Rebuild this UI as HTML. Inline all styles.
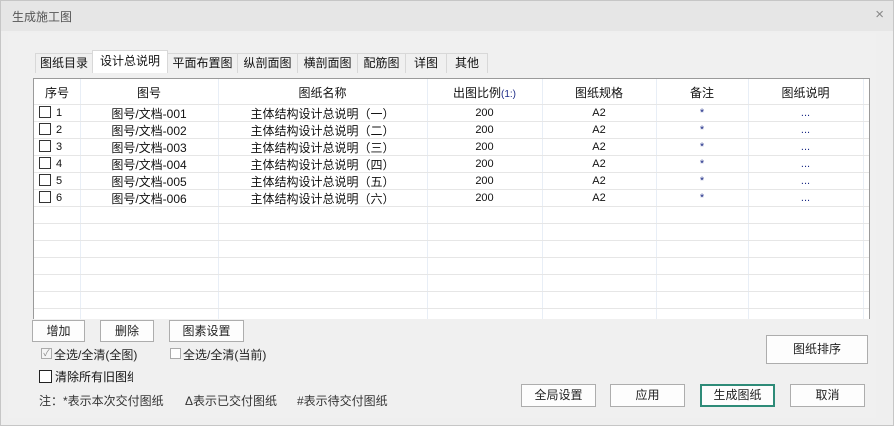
<!DOCTYPE html>
<html><head><meta charset="utf-8"><style>
*{box-sizing:border-box;margin:0;padding:0}
body{width:894px;height:426px;overflow:hidden;background:#efefef;font-family:"Liberation Sans","Noto Sans CJK SC",sans-serif;font-size:12px;color:#111;position:relative}
.a{position:absolute}
#frame{left:0;top:0;width:894px;height:426px;border:1px solid #c6c6c6}
#title{left:1px;top:1px;width:892px;height:30px;background:#e6e6e6}
#title span{position:absolute;left:11px;top:7px;color:#555;font-size:12px}
#close{right:10px;top:6px;color:#888;font-size:15px}
#panel{left:8px;top:33px;width:868px;height:385px;background:#f0f0f0}
.tab{position:absolute;top:53px;height:20px;border:1px solid #d8d8d8;border-bottom:none;background:#f0f0f0;text-align:center;line-height:18px;font-size:12px;color:#111}
.tab.sel{top:50px;height:23px;background:#fff;line-height:20px;z-index:2}
#tbl{left:33px;top:78px;width:837px;height:241px;background:#fff;border:1px solid #9a9a9a;border-right:1px solid #9a9a9a;border-bottom:none}
.vl{position:absolute;top:0;width:1px;height:240px;background:#e8eef6}
.hl{position:absolute;left:0;width:835px;height:1px;background:#e6e6e6}
.h{position:absolute;top:5px;text-align:center;font-size:12px}
.c{position:absolute;text-align:center;font-size:11px;color:#111}
.cb{position:absolute;width:12px;height:12px;border:1px solid #333;background:#fff}
.btn{position:absolute;border:1px solid #adadad;background:#fdfdfd;text-align:center;font-size:12px;color:#222}
.blue{color:#1b2a86}
</style></head><body>
<div class="a" id="frame"></div>
<div class="a" id="title"><span>生成施工图</span></div>
<div class="a" id="close">×</div>
<div class="a" id="panel"></div>

<div class="tab" style="left:35px;width:58px">图纸目录</div>
<div class="tab sel" style="left:92px;width:76px">设计总说明</div>
<div class="tab" style="left:167px;width:71px">平面布置图</div>
<div class="tab" style="left:237px;width:61px">纵剖面图</div>
<div class="tab" style="left:297px;width:61px">横剖面图</div>
<div class="tab" style="left:357px;width:49px">配筋图</div>
<div class="tab" style="left:405px;width:42px">详图</div>
<div class="tab" style="left:446px;width:42px">其他</div>

<div class="a" id="tbl">
  <div class="vl" style="left:46px"></div>
  <div class="vl" style="left:184px"></div>
  <div class="vl" style="left:393px"></div>
  <div class="vl" style="left:508px"></div>
  <div class="vl" style="left:622px"></div>
  <div class="vl" style="left:714px"></div>
  <div class="vl" style="left:829px"></div>
  <div class="hl" style="top:25px"></div>
  <div class="hl" style="top:42px"></div>
  <div class="hl" style="top:59px"></div>
  <div class="hl" style="top:76px"></div>
  <div class="hl" style="top:93px"></div>
  <div class="hl" style="top:110px"></div>
  <div class="hl" style="top:127px"></div>
  <div class="hl" style="top:144px"></div>
  <div class="hl" style="top:161px"></div>
  <div class="hl" style="top:178px"></div>
  <div class="hl" style="top:195px"></div>
  <div class="hl" style="top:212px"></div>
  <div class="hl" style="top:229px"></div>
  <div class="h" style="left:0;width:46px">序号</div>
  <div class="h" style="left:46px;width:138px">图号</div>
  <div class="h" style="left:184px;width:209px">图纸名称</div>
  <div class="h" style="left:393px;width:115px">出图比例<span class="blue" style="font-size:10px">(1:)</span></div>
  <div class="h" style="left:508px;width:114px">图纸规格</div>
  <div class="h" style="left:622px;width:92px">备注</div>
  <div class="h" style="left:714px;width:115px">图纸说明</div>
</div>

<div id="rows"></div>
<script>
var nums=["一","二","三","四","五","六"],h="";
for(var i=0;i<6;i++){var y=105+i*17;
h+='<div class="cb" style="left:39px;top:'+(y+1)+'px"></div>';
h+='<div class="c" style="left:56px;top:'+(y+2)+'px">'+(i+1)+'</div>';
h+='<div class="c" style="left:80px;width:138px;top:'+y+'px;font-size:12px">图号/文档-00'+(i+1)+'</div>';
h+='<div class="c" style="left:218px;width:209px;top:'+y+'px;font-size:12px">主体结构设计总说明（'+nums[i]+'）</div>';
h+='<div class="c" style="left:427px;width:115px;top:'+(y+2)+'px">200</div>';
h+='<div class="c" style="left:542px;width:114px;top:'+(y+2)+'px">A2</div>';
h+='<div class="c blue" style="left:656px;width:92px;top:'+(y+2)+'px">*</div>';
h+='<div class="c blue" style="left:748px;width:115px;top:'+(y+2)+'px">...</div>';}
document.getElementById("rows").outerHTML=h;
</script>

<div class="btn" style="left:32px;top:320px;width:53px;height:22px;line-height:20px">增加</div>
<div class="btn" style="left:100px;top:320px;width:54px;height:22px;line-height:20px">删除</div>
<div class="btn" style="left:169px;top:320px;width:75px;height:22px;line-height:20px">图素设置</div>

<div class="a" style="left:41px;top:348px;width:11px;height:11px;border:1px solid #aaa;background:#f4f4f4;font-size:9px;line-height:9px;color:#888;text-align:center">✓</div>
<div class="a" style="left:54px;top:346px;color:#222">全选/全清(全图)</div>
<div class="a" style="left:170px;top:348px;width:11px;height:11px;border:1px solid #aaa;background:#fff"></div>
<div class="a" style="left:183px;top:346px;color:#222">全选/全清(当前)</div>

<div class="a" style="left:39px;top:370px;width:13px;height:13px;border:1px solid #222;background:#fff"></div>
<div class="a" style="left:55px;top:368px;width:78px;overflow:hidden;white-space:nowrap;color:#111;font-size:12px">清除所有旧图纸</div>

<div class="a" style="left:39px;top:392px;color:#333">注：*表示本次交付图纸</div>
<div class="a" style="left:185px;top:392px;color:#333">Δ表示已交付图纸</div>
<div class="a" style="left:297px;top:392px;color:#333">#表示待交付图纸</div>

<div class="btn" style="left:766px;top:335px;width:102px;height:29px;line-height:27px">图纸排序</div>
<div class="btn" style="left:521px;top:384px;width:75px;height:23px;line-height:21px">全局设置</div>
<div class="btn" style="left:610px;top:384px;width:75px;height:23px;line-height:21px">应用</div>
<div class="btn" style="left:700px;top:384px;width:75px;height:23px;line-height:19px;border:2px solid #2e8b78">生成图纸</div>
<div class="btn" style="left:790px;top:384px;width:75px;height:23px;line-height:21px">取消</div>
</body></html>
